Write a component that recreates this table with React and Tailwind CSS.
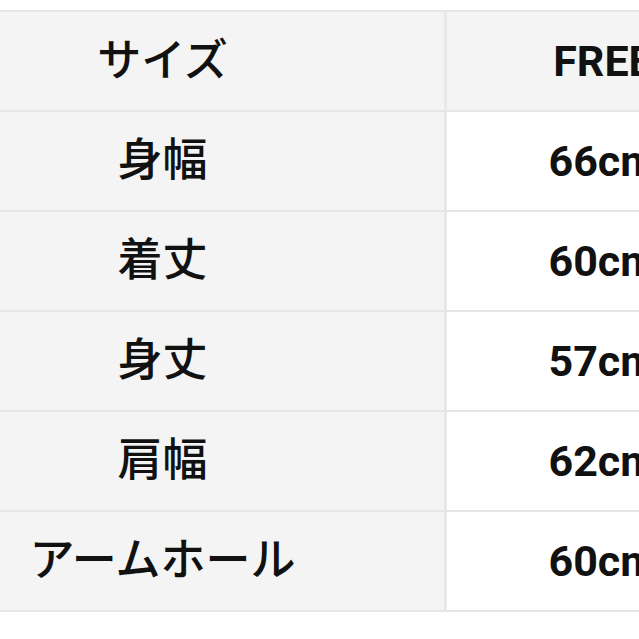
const rows = [
  ["身幅", "66cm"],
  ["着丈", "60cm"],
  ["身丈", "57cm"],
  ["肩幅", "62cm"],
  ["アームホール", "60cm"],
];

export default function App() {
  return (
    <div
      className="w-[639px] h-[639px] overflow-hidden bg-white pt-[10px] text-[#111]"
      style={{ fontFamily: '"Roboto", "Noto Sans CJK JP", sans-serif' }}
    >
      <div className="-ml-[119px] w-[880px] border-t-2 border-[#e6e6e6]">
        <div className="grid grid-cols-[566px_312px] h-[100px] border-b-2 border-[#e6e6e6]">
          <div className="flex items-center justify-center bg-[#f4f4f4] border-r-[3px] border-[#e8e8e8] text-[44px] font-medium">
            サイズ
          </div>
          <div className="flex items-center justify-center bg-[#f4f4f4] text-[43px] font-bold">
            FREE
          </div>
        </div>
        {rows.map(([label, value]) => (
          <div
            key={label}
            className="grid grid-cols-[566px_312px] h-[100px] border-b-2 border-[#e6e6e6]"
          >
            <div className="flex items-center justify-center bg-[#f4f4f4] border-r-[3px] border-[#e8e8e8] text-[45px] font-medium">
              {label}
            </div>
            <div className="flex items-center justify-center bg-white text-[43px] font-bold">
              {value}
            </div>
          </div>
        ))}
      </div>
    </div>
  );
}
